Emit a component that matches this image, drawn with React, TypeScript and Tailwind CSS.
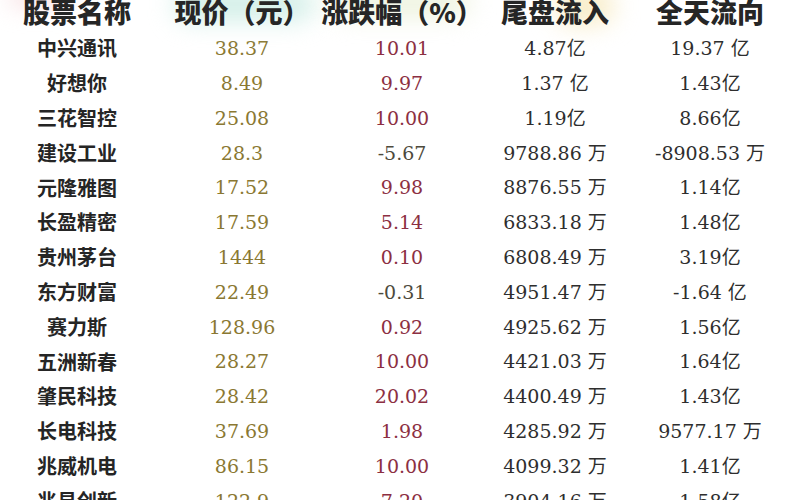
import type React from 'react'

type Row = {
	name: string
	price: string
	change: string
	tail: string
	day: string
}

const ROWS: Row[] = [
	{ name: '中兴通讯', price: '38.37', change: '10.01', tail: '4.87亿', day: '19.37 亿' },
	{ name: '好想你', price: '8.49', change: '9.97', tail: '1.37 亿', day: '1.43亿' },
	{ name: '三花智控', price: '25.08', change: '10.00', tail: '1.19亿', day: '8.66亿' },
	{ name: '建设工业', price: '28.3', change: '-5.67', tail: '9788.86 万', day: '-8908.53 万' },
	{ name: '元隆雅图', price: '17.52', change: '9.98', tail: '8876.55 万', day: '1.14亿' },
	{ name: '长盈精密', price: '17.59', change: '5.14', tail: '6833.18 万', day: '1.48亿' },
	{ name: '贵州茅台', price: '1444', change: '0.10', tail: '6808.49 万', day: '3.19亿' },
	{ name: '东方财富', price: '22.49', change: '-0.31', tail: '4951.47 万', day: '-1.64 亿' },
	{ name: '赛力斯', price: '128.96', change: '0.92', tail: '4925.62 万', day: '1.56亿' },
	{ name: '五洲新春', price: '28.27', change: '10.00', tail: '4421.03 万', day: '1.64亿' },
	{ name: '肇民科技', price: '28.42', change: '20.02', tail: '4400.49 万', day: '1.43亿' },
	{ name: '长电科技', price: '37.69', change: '1.98', tail: '4285.92 万', day: '9577.17 万' },
	{ name: '兆威机电', price: '86.15', change: '10.00', tail: '4099.32 万', day: '1.41亿' },
	{ name: '兆易创新', price: '122.9', change: '7.20', tail: '3904.16 万', day: '1.58亿' },
]

const GRID = 'grid grid-cols-[154px_176px_144px_162px_148px]'
const NUM = "[font-family:'DejaVu_Serif','Noto_Sans_CJK_SC',serif]"

const HeaderCell = ({
	children,
	glow,
}: {
	children: React.ReactNode
	glow?: string
}) => (
	<div className="relative flex items-center justify-center whitespace-nowrap">
		{glow && <div className={`absolute rounded-full blur-md ${glow}`} />}
		<span className="relative">{children}</span>
	</div>
)

export default function App() {
	return (
		<div className="w-[800px] h-[500px] overflow-hidden bg-white [font-family:'Noto_Sans_CJK_SC',sans-serif]">
			<div
				className={`${GRID} h-[40px] -mt-[9px] text-[27px] leading-none font-black text-[#262626]`}
			>
				<HeaderCell glow="left-[10px] top-[-4px] w-[60px] h-[18px] bg-[#f7d9dc]">
					股票名称
				</HeaderCell>
				<HeaderCell glow="left-[20px] top-[-4px] w-[140px] h-[34px] bg-[#d3efe8]">
					现价（元）
				</HeaderCell>
				<HeaderCell glow="left-[0px] top-[-4px] w-[140px] h-[30px] bg-[#eef3df]">
					涨跌幅（%）
				</HeaderCell>
				<HeaderCell glow="left-[80px] top-[-4px] w-[60px] h-[38px] bg-[#f8edc9]">
					尾盘流入
				</HeaderCell>
				<HeaderCell>全天流向</HeaderCell>
			</div>
			{ROWS.map((r) => (
				<div key={r.name} className={`${GRID} h-[34.8px] items-center`}>
					<div className="text-center text-[20px] font-bold text-[#252525]">
						{r.name}
					</div>
					<div className={`text-center text-[19px] text-[#8a7832] ${NUM}`}>
						{r.price}
					</div>
					<div
						className={`text-center text-[19px] ${NUM} ${
							r.change.startsWith('-') ? 'text-[#4d4a3c]' : 'text-[#8c2f42]'
						}`}
					>
						{r.change}
					</div>
					<div className={`text-center text-[19px] text-[#2e2e2e] ${NUM}`}>
						{r.tail}
					</div>
					<div className={`text-center text-[19px] text-[#2e2e2e] ${NUM}`}>
						{r.day}
					</div>
				</div>
			))}
		</div>
	)
}
